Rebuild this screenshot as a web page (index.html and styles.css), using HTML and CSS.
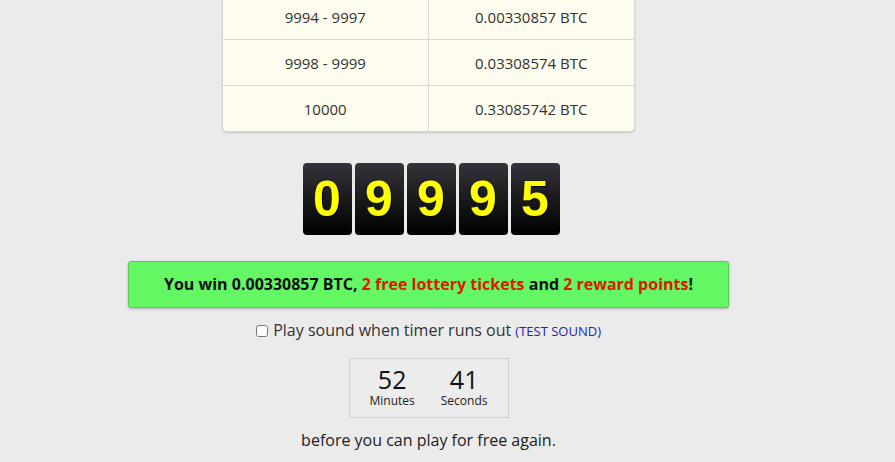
FILE: index.html
```html
<!DOCTYPE html>
<html lang="en">
<head>
  <meta charset="UTF-8" />
  <title>Free BTC Roll</title>
  <link rel="stylesheet" href="styles.css">
</head>
<body>
  <div class="page">
    <!-- payout table (top rows scrolled off) -->
    <table class="payout">
      <tr><td>9994 - 9997</td><td>0.00330857 BTC</td></tr>
      <tr><td>9998 - 9999</td><td>0.03308574 BTC</td></tr>
      <tr><td>10000</td><td>0.33085742 BTC</td></tr>
    </table>

    <div class="digits">
      <span class="digit">0</span>
      <span class="digit">9</span>
      <span class="digit">9</span>
      <span class="digit">9</span>
      <span class="digit">5</span>
    </div>

    <div class="win-box">
      You win 0.00330857 BTC, <span class="red">2 free lottery tickets</span> and <span class="red">2 reward points</span>!
    </div>

    <div class="sound">
      <label><input type="checkbox" id="playSound" /> Play sound when timer runs out</label>
      <a href="#" class="test-sound">(TEST SOUND)</a>
    </div>

    <div class="timer">
      <div class="timer-part"><span class="num">52</span><span class="unit">Minutes</span></div>
      <div class="timer-part"><span class="num">41</span><span class="unit">Seconds</span></div>
    </div>

    <p class="again">before you can play for free again.</p>
  </div>
</body>
</html>
```

FILE: styles.css
```css
body {
  margin: 0;
  padding-right: 38px;
  background-color: #ebebeb;
  font-family: 'Open Sans', 'Noto Sans', sans-serif;
  color: #333;
}
.page {
  width: 601px;
  margin: 0 auto;
  display: flex;
  flex-direction: column;
  align-items: center;
}
.payout {
  width: 413px;
  margin-top: -6px;
  border-collapse: separate;
  border-spacing: 0;
  background: #fdfcee;
  border: 1px solid #d4d4d4;
  border-top: none;
  border-radius: 0 0 5px 5px;
  box-shadow: 0 1px 2px rgba(0, 0, 0, 0.15);
  font-size: 15px;
}
.payout td {
  width: 50%;
  height: 45px;
  text-align: center;
  border-top: 1px solid #d8d8d8;
  padding: 0;
}
.payout tr:first-child td {
  border-top: none;
}
.payout td:first-child {
  border-right: 1px solid #d8d8d8;
}
.digits {
  display: flex;
  gap: 3px;
  margin-top: 31px;
  margin-left: 5px;
}
.digit {
  width: 49px;
  height: 72px;
  border-radius: 4px;
  background: linear-gradient(#34343a, #000);
  color: #ffff00;
  font-family: 'Liberation Sans', Arial, sans-serif;
  font-weight: bold;
  font-size: 50px;
  line-height: 72px;
  text-align: center;
  text-shadow: 1px 1px 1px #000, -1px -1px 0 #222;
}
.win-box {
  box-sizing: border-box;
  width: 601px;
  height: 47px;
  margin-top: 26px;
  background: #63f763;
  border: 1px solid #55cc55;
  border-radius: 3px;
  box-shadow: 0 1px 3px rgba(0, 0, 0, 0.25);
  font-size: 16px;
  font-weight: bold;
  color: #111;
  line-height: 45px;
  text-align: center;
}
.red {
  color: #dd1a00;
}
.sound {
  margin-top: 11px;
  font-size: 16px;
  line-height: 22px;
}
.sound label {
  color: #333;
}
.sound input {
  margin: 0 1px 0 0;
  width: 12px;
  height: 12px;
  vertical-align: -1px;
}
.test-sound {
  color: #2222bb;
  font-size: 13px;
  text-decoration: none;
}
.timer {
  display: flex;
  justify-content: center;
  gap: 26px;
  width: 158px;
  height: 58px;
  margin-top: 16px;
  border: 1px solid #cfcfcf;
  background: #ececec;
}
.timer-part {
  display: flex;
  flex-direction: column;
  align-items: center;
  padding-top: 7px;
}
.num {
  font-size: 25px;
  line-height: 27px;
  color: #111;
}
.unit {
  font-size: 12px;
  line-height: 15px;
  color: #222;
}
.again {
  margin: 11px 0 0;
  font-size: 16px;
  color: #222;
}
```
